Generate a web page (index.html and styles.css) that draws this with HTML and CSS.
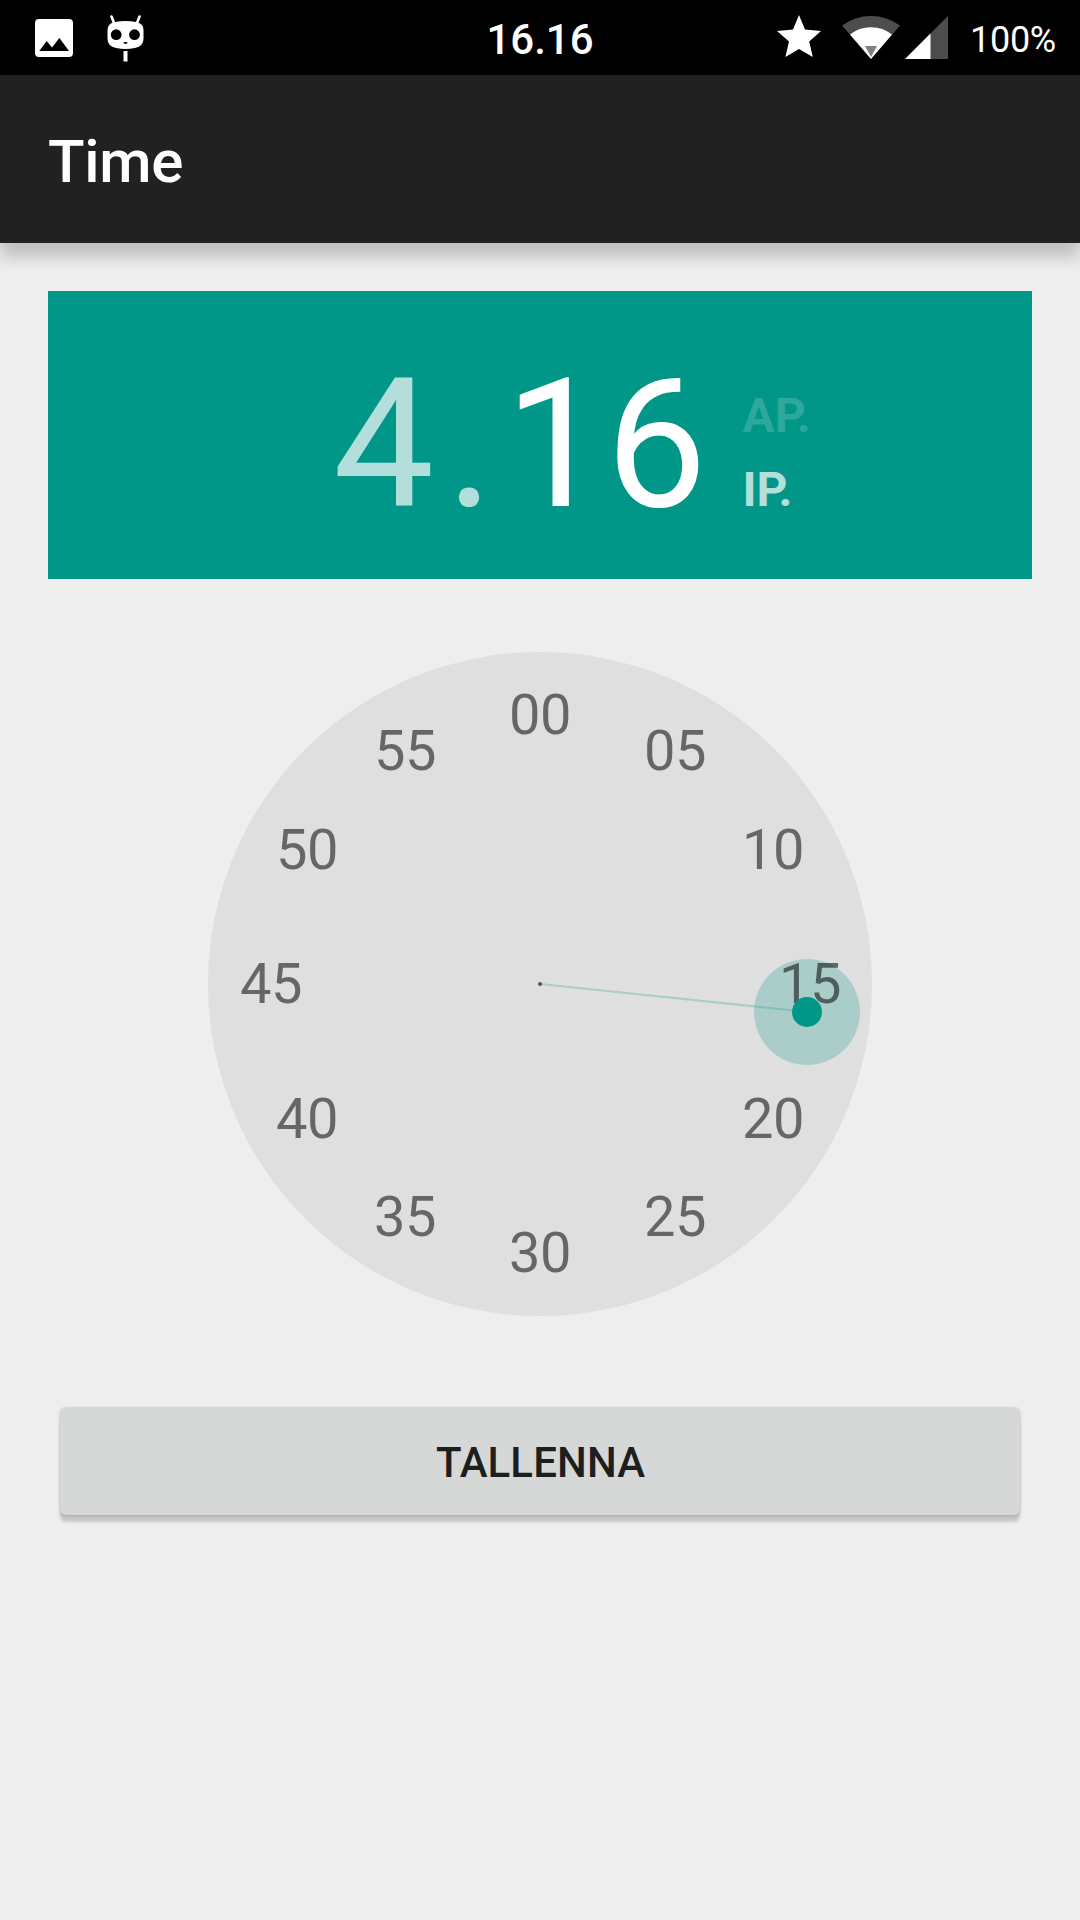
FILE: index.html
```html
<!DOCTYPE html>
<html lang="fi">
<head>
<meta charset="utf-8">
<title>Time</title>
<link rel="stylesheet" href="styles.css">
</head>
<body>
<header class="status">
  <div class="status-left">
    <svg class="icon-image" width="38" height="38" viewBox="0 0 38 38"><path fill="#fff" fill-rule="evenodd" d="M4 0H34Q38 0 38 4V34Q38 38 34 38H4Q0 38 0 34V4Q0 0 4 0ZM4.300 32H34L24.400 19L17 28.400L11.700 22Z"/></svg>
    <svg class="icon-cid" width="37" height="48" viewBox="0 0 37 48"><path d="M4.500 1.500L7 8M32.500 1.500L30 8" stroke="#fff" stroke-width="2.600" stroke-linecap="round"/><path fill="#fff" d="M8 7Q18.500 5 29 7Q36.500 8.500 36.500 15V24Q36.500 31 28 33Q18.500 35 9 33Q.5 31 .5 24V15Q.5 8.500 8 7Z"/><circle cx="9.200" cy="19.700" r="5.400"/><circle cx="27.500" cy="19.700" r="5.400"/><path d="M16.500 27H20.500Q20.500 29 18.500 29Q16.500 29 16.500 27Z"/><path fill="#fff" d="M16.500 36H20.500V46.500H16.500Z"/></svg>
  </div>
  <div class="status-clock">16.16</div>
  <div class="status-right">
    <svg class="icon-star" width="44" height="43" viewBox="0 0 44 43"><path fill="#fff" d="M22 0L28 14.600L44 16L32.200 26.500L35.800 42L22 34L8.400 42L12 26.500L0 16L16 14.600Z"/></svg>
    <svg class="icon-wifi" width="58" height="43" viewBox="0 0 58 43"><path fill="#4d4d4d" d="M0 9.500Q13 0 29 0T58 9.500L29 43Z"/><path fill="#fff" d="M8 18.600Q17 11.300 29 11.300T50 18.600L29 43Z"/><path fill="#808080" d="M23 30H35L29 41Z"/></svg>
    <svg class="icon-signal" width="43" height="43" viewBox="0 0 43 43"><path fill="#4d4d4d" d="M43 0V43H0Z"/><path fill="#fff" d="M25.500 17.500V43H0Z"/></svg>
    <span class="battery">100%</span>
  </div>
</header>
<div class="appbar"><h1>Time</h1></div>
<main>
  <section class="time">
    <span class="dim">4</span><span class="dim sep">.</span><span>16</span>
    <div class="ampm"><span class="am">AP.</span><span class="pm">IP.</span></div>
  </section>
  <svg class="dial" width="664" height="664" viewBox="-332 -332 664 664">
    <circle r="332" fill="#dfdfdf"/>
    <circle cx="267" cy="28" r="53" fill="#009688" fill-opacity=".235"/>
    <path d="M0 0L254 26.500" stroke="#009688" stroke-opacity=".235" stroke-width="2"/>
    <g class="numbers">
      <text x="0" y="-250">00</text><text x="135" y="-214">05</text><text x="233" y="-115">10</text>
      <text x="270" y="19">15</text><text x="233" y="154">20</text><text x="135" y="252">25</text>
      <text x="0" y="288">30</text><text x="-135" y="252">35</text><text x="-233" y="154">40</text>
      <text x="-269" y="19">45</text><text x="-233" y="-115">50</text><text x="-135" y="-214">55</text>
    </g>
    <circle cx="267" cy="28" r="15" fill="#009688"/>
    <circle r="2" fill="#555"/>
  </svg>
  <button class="save" type="button">TALLENNA</button>
</main>
</body>
</html>
```
FILE: styles.css
```css
* { box-sizing: border-box; }
body {
  margin: 0;
  width: 1080px;
  height: 1920px;
  overflow: hidden;
  background: #eee;
  font-family: Roboto, sans-serif;
}
svg { display: block; flex: none; }
.status {
  height: 75px;
  display: grid;
  grid-template-columns: 1fr auto 1fr;
  background: #000;
  color: #fff;
}
.status-left { display: flex; align-items: flex-start; padding-left: 35px; }
.icon-image { margin-top: 19px; }
.icon-cid { margin: 15px 0 0 34px; }
.status-clock {
  font-size: 42px;
  font-weight: 500;
  line-height: 49px;
  padding-top: 15px;
}
.status-right {
  display: flex;
  align-items: flex-start;
  justify-content: flex-end;
  padding-right: 24px;
}
.icon-star { margin-top: 15px; }
.icon-wifi { margin: 16px 0 0 21px; }
.icon-signal { margin: 16px 0 0 5px; }
.battery { font-size: 36px; line-height: 42px; margin: 19px 0 0 22px; letter-spacing: -.25px; }
.appbar {
  height: 168px;
  display: flex;
  align-items: center;
  padding: 5px 48px 0;
  background: #212121;
  color: #fff;
  box-shadow: 0 14px 15px rgba(0, 0, 0, .2);
}
h1 { margin: 0; font-size: 60px; line-height: 71px; font-weight: 500; letter-spacing: -.3px; }
main {
  display: flex;
  flex-direction: column;
  align-items: center;
  padding: 48px 48px 0;
}
.time {
  width: 984px;
  height: 288px;
  display: flex;
  background: #009688;
  color: #fff;
  padding: 45px 0 0 285px;
  font-size: 180px;
  line-height: 217px;
}
.dim { color: #b2dfdb; }
.sep { padding: 0 11px 0 12px; }
.ampm {
  display: flex;
  flex-direction: column;
  gap: 1px;
  font-size: 48px;
  font-weight: 700;
  line-height: 73px;
  padding: 43px 0 0 35.500px;
}
.am { color: #2ea89d; }
.pm { color: #b2dfdb; }
.dial { margin-top: 73px; }
.numbers {
  font-size: 56px;
  letter-spacing: -.5px;
  fill: rgba(0, 0, 0, .54);
  text-anchor: middle;
}
.save {
  width: 960px;
  height: 108px;
  margin-top: 91px;
  border: 0;
  border-radius: 6px;
  background: #d6d8d7;
  color: #1d1e1e;
  font: 500 42px/49px Roboto, sans-serif;
  letter-spacing: .1px;
  padding: 3px 0 0 1px;
  box-shadow: 0 7px 3px rgba(0, 0, 0, .16), 0 1px 3px rgba(0, 0, 0, .18);
}
```
